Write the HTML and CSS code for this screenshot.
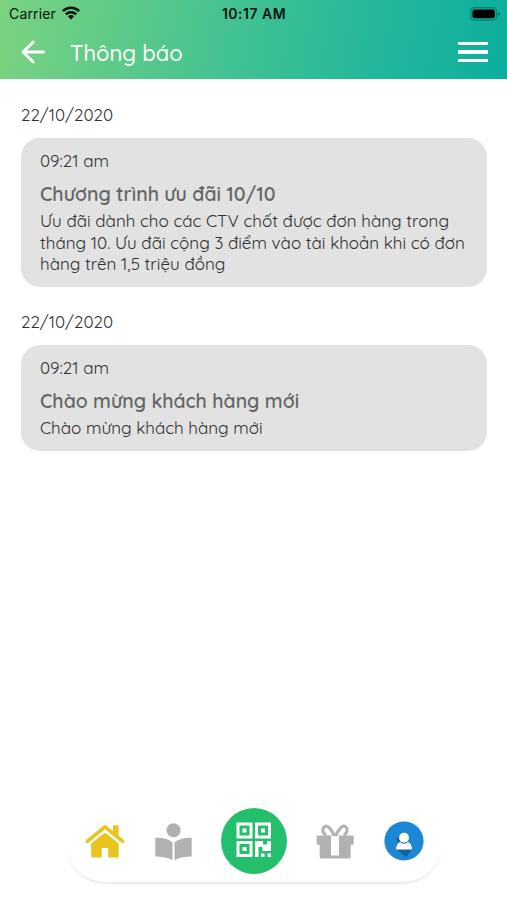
FILE: index.html
```html
<!DOCTYPE html>
<html lang="vi">
<head>
<meta charset="utf-8">
<meta name="viewport" content="width=device-width, initial-scale=1">
<title>Thông báo</title>
<link rel="stylesheet" href="styles.css">
</head>
<body>
<div class="app">
  <header class="header">
    <div class="status">
      <div class="carrier"><span>Carrier</span>
        <svg class="wifi" width="18" height="14" viewBox="0 0 18 14"><g fill="none" stroke="#07130d" stroke-width="2.5"><path d="M.9 5.2a11.5 11.5 0 0 1 16.2 0"/><path d="M3.8 8.4a7.4 7.4 0 0 1 10.4 0"/></g><path fill="#07130d" d="M5.9 10.4a4.4 4.4 0 0 1 6.2 0L9 13.5z"/></svg>
      </div>
      <div class="clock">10:17 AM</div>
      <svg class="battery" width="31" height="14" viewBox="0 0 31 14"><rect x=".7" y=".7" width="26" height="12.4" rx="3.8" fill="none" stroke="#087e70" stroke-width="1.3"/><rect x="2.5" y="2.5" width="22.4" height="8.8" rx="2" fill="#000"/><path d="M28 4.8q2 .6 2 2.100t-2 2.100z" fill="#087e70"/></svg>
    </div>
    <div class="bar">
      <svg class="back" width="24" height="24" viewBox="0 0 24 24" fill="none" stroke="#fff" stroke-width="2.8" stroke-linecap="round" stroke-linejoin="round"><path d="M12.2 2 2 12l10.2 10M2.5 12H22.5"/></svg>
      <h1 class="heading">Thông báo</h1>
      <div class="menu"><i></i><i></i><i></i></div>
    </div>
  </header>
  <main class="list">
    <section class="group">
      <div class="date">22/10/2020</div>
      <article class="card">
        <div class="time">09:21 am</div>
        <h2 class="title">Chương trình ưu đãi 10/10</h2>
        <p class="text">Ưu đãi dành cho các CTV chốt được đơn hàng trong<br>tháng 10. Ưu đãi cộng 3 điểm vào tài khoản khi có đơn<br>hàng trên 1,5 triệu đồng</p>
      </article>
    </section>
    <section class="group">
      <div class="date">22/10/2020</div>
      <article class="card">
        <div class="time">09:21 am</div>
        <h2 class="title">Chào mừng khách hàng mới</h2>
        <p class="text">Chào mừng khách hàng mới</p>
      </article>
    </section>
  </main>
  <nav class="tabs">
    <svg class="home" width="40" height="34" viewBox="0 0 40 34" fill="#e9c31e"><path d="M20 8.5 6.2 19.5V32q0 1.5 1.5 1.5h9v-9.6h6.5v9.6h9q1.5 0 1.5-1.500V19.500z"/><path d="M2.500 18.600 20 4.400l17.500 14.200" fill="none" stroke="#fff" stroke-width="5"/><path d="M28 1.300h5.600v11.500L28 8z"/><path d="M2.300 17.300 20 2.800l17.700 14.500" fill="none" stroke="#e9c31e" stroke-width="3.600" stroke-linecap="round" stroke-linejoin="round"/></svg>
    <svg class="reader" width="37" height="38" viewBox="0 0 37 38" fill="#b1b1b1"><circle cx="18.5" cy="7.3" r="7"/><path d="M.3 14.800q10.500-.6 17.200 4.600v17.800Q11 33.500.3 33.500zM36.700 14.800q-10.500-.6-17.200 4.600v17.800Q26 33.500 36.700 33.500z"/></svg>
    <div class="scan">
      <svg width="36" height="36" viewBox="0 0 36 36"><g fill="none" stroke="#fff" stroke-width="3"><path d="M2 2h13v13H2zM20.500 2h13v13h-13zM2 20.500h13v13H2z"/></g><g fill="#fff"><path d="M6.500 6.500h4v4h-4zM25 6.500h4v4h-4zM6.500 25h4v4h-4zM19 19h8v3.500h4V19h4v10h-8.500v-4h-4v10H19zM25 31.500h3.500V35H25zM31.500 31.500H35V35h-3.500z"/></g></svg>
    </div>
    <svg class="gift" width="38" height="35" viewBox="0 0 38 35"><g fill="none" stroke="#b1b1b1" stroke-width="3"><path d="M18.500 12C15.500 5.500 12 .8 9 2.400c-3.800 2.100-2 7.700 1.500 8.600M19.500 12C22.500 5.500 26 .8 29 2.400c3.800 2.100 2 7.700-1.500 8.600"/></g><path fill="#b1b1b1" d="M1.500 11.500h35q1.200 0 1.200 1.200v8h-3V33q0 1.500-1.500 1.500H5.200q-1.500 0-1.500-1.500V20.700h-3v-8q0-1.200.8-1.200z"/><path fill="#fff" d="M15 12h8v19.500h-8z"/></svg>
    <svg class="profile" width="40" height="40" viewBox="0 0 40 40"><circle cx="20" cy="20" r="19.600" fill="#1c87d5"/><path d="m16 14-4 4.500 2.300 2.200-2.300 7.800 10.200 7.500 5.800-8z" fill="#12629d"/><circle cx="20" cy="16.800" r="5" fill="#fff"/><path d="M12 28.500q.2-6 4-7.500 4 3.500 8 0 3.800 1.500 4 7.500z" fill="#fff"/></svg>
  </nav>
</div>
</body>
</html>
```
FILE: styles.css
```css
* { box-sizing: border-box; }
body { margin: 0; background: #fff; font-family: Quicksand, Lato, "Noto Sans", sans-serif; color: #303030; }
.app { height: 900px; display: flex; flex-direction: column; overflow: hidden; }
.header { height: 79px; background: linear-gradient(100deg, #7bd37f 0%, #3fc193 48%, #22b69b 75%, #0baf9d 100%); }
.status { height: 27px; display: grid; grid-template-columns: 1fr auto 1fr; align-items: center; padding: 0 6px 0 9px; color: #07130d; font-family: Inter, sans-serif; font-size: 14px; }
.carrier { display: flex; align-items: center; gap: 6px; letter-spacing: .15px; }
.wifi { margin-top: -2px; }
.clock { font-weight: 600; letter-spacing: .5px; margin-right: 2px; }
.battery { justify-self: end; }
.bar { height: 50px; display: flex; align-items: center; padding: 0 19px 0 21px; }
.heading { margin: 1px auto 0 25px; color: #fff; font-size: 22px; font-weight: 500; line-height: 30px; }
.menu { width: 30px; display: grid; gap: 5px; }
.menu i { height: 3.5px; background: #fff; }
.list { flex: 1; padding: 24px 20px 0 21px; }
.group { margin-bottom: 23px; }
.date { height: 35px; line-height: 24px; font-size: 17px; }
.card { background: #e2e2e2; border-radius: 19px; padding: 12px 19px 12px; }
.time { line-height: 22px; font-size: 17px; }
.title { margin: 9px 0 3px; line-height: 26px; font-size: 19.450px; font-weight: 600; color: #666; }
.text { margin: 0; padding-bottom: .5px; line-height: 21.5px; font-size: 17px; white-space: nowrap; }
.date, .time, .text { font-weight: 450; }
.tabs { width: 378px; height: 82px; margin: 0 auto 18px; padding: 0 19px 0 20px; display: flex; align-items: center; justify-content: space-between; border-radius: 0 0 40px 40px; background: #fff; box-shadow: 0 3px 2px -1px #eaeaea; }
.reader { margin: 1px -1px 0 1px; }
.scan { width: 66px; height: 66px; border-radius: 50%; background: #24bf6d; display: grid; place-items: center; }
.scan svg { margin-bottom: 2px; }
```
